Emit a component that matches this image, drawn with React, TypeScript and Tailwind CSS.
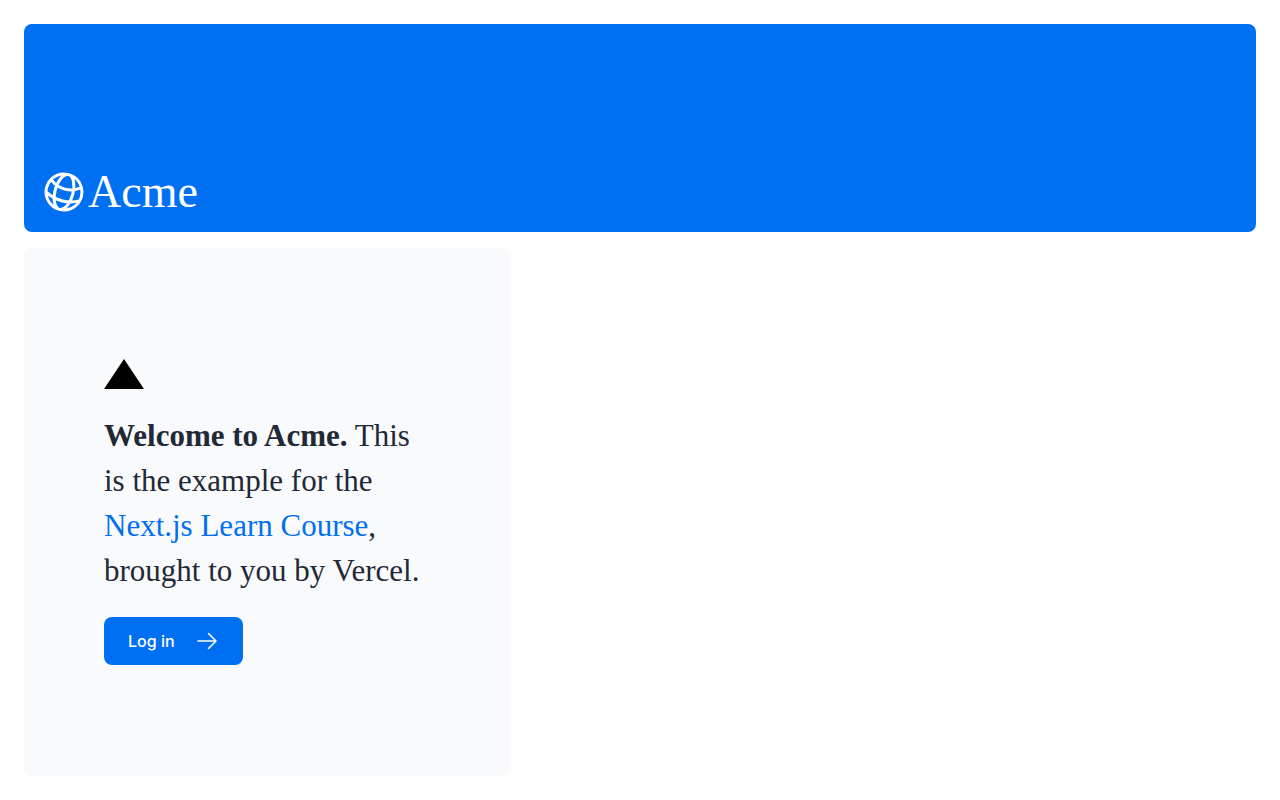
function GlobeIcon() {
  return (
    <svg
      className="size-12 shrink-0 rotate-15"
      viewBox="0 0 24 24"
      fill="none"
      stroke="currentColor"
      strokeWidth={1.5}
      strokeLinecap="round"
      strokeLinejoin="round"
      aria-hidden="true"
    >
      <path d="M12 21a9.004 9.004 0 0 0 8.716-6.747M12 21a9.004 9.004 0 0 1-8.716-6.747M12 21c2.485 0 4.5-4.03 4.5-9S14.485 3 12 3m0 18c-2.485 0-4.5-4.03-4.5-9S9.515 3 12 3m0 0a8.997 8.997 0 0 1 7.843 4.582M12 3a8.997 8.997 0 0 0-7.843 4.582m15.686 0A11.953 11.953 0 0 1 12 10.5c-2.998 0-5.74-1.1-7.843-2.918m15.686 0A8.959 8.959 0 0 1 21 12c0 .778-.099 1.533-.284 2.253m0 0A17.919 17.919 0 0 1 12 16.5c-3.162 0-6.133-.815-8.716-2.247m0 0A9.015 9.015 0 0 1 3 12c0-1.605.42-3.113 1.157-4.418" />
    </svg>
  );
}

function ArrowRightIcon() {
  return (
    <svg
      className="size-5 md:size-6"
      viewBox="0 0 24 24"
      fill="none"
      stroke="currentColor"
      strokeWidth={1.5}
      strokeLinecap="round"
      strokeLinejoin="round"
      aria-hidden="true"
    >
      <path d="M13.5 4.5 21 12m0 0-7.5 7.5M21 12H3" />
    </svg>
  );
}

function AcmeLogo() {
  return (
    <div className="flex items-center font-['Liberation_Serif',serif] leading-none text-white">
      <GlobeIcon />
      <p className="text-[46px] leading-none">Acme</p>
    </div>
  );
}

export default function App() {
  return (
    <main className="flex min-h-screen flex-col bg-white p-6 font-['Inter',sans-serif] antialiased">
      <header className="flex h-20 shrink-0 items-end rounded-lg bg-[#0070f3] p-4 md:h-52">
        <AcmeLogo />
      </header>
      <div className="mt-4 flex grow flex-col gap-4 md:flex-row">
        <section className="flex flex-col justify-center gap-6 rounded-lg bg-[#f9fafb] px-6 py-10 md:w-2/5 md:px-20">
          <svg className="h-[30px] w-10" viewBox="0 0 40 30" aria-hidden="true">
            <path d="M20 0 40 30H0Z" fill="#000" />
          </svg>
          <p className="font-['Liberation_Serif',serif] text-xl text-[#1f2937] md:text-[31px] md:leading-[45px]">
            <strong>Welcome to Acme.</strong> This is the example for the{' '}
            <a href="https://nextjs.org/learn/" className="text-[#0070f3]">
              Next.js Learn Course
            </a>
            , brought to you by Vercel.
          </p>
          <a
            href="/login"
            className="flex items-center gap-5 self-start rounded-lg bg-[#0070f3] px-6 py-3 text-sm font-medium text-white transition-colors hover:bg-blue-400 md:text-base"
          >
            <span>Log in</span>
            <ArrowRightIcon />
          </a>
        </section>
        <div className="flex items-center justify-center p-6 md:w-3/5 md:px-28 md:py-12" />
      </div>
    </main>
  );
}
